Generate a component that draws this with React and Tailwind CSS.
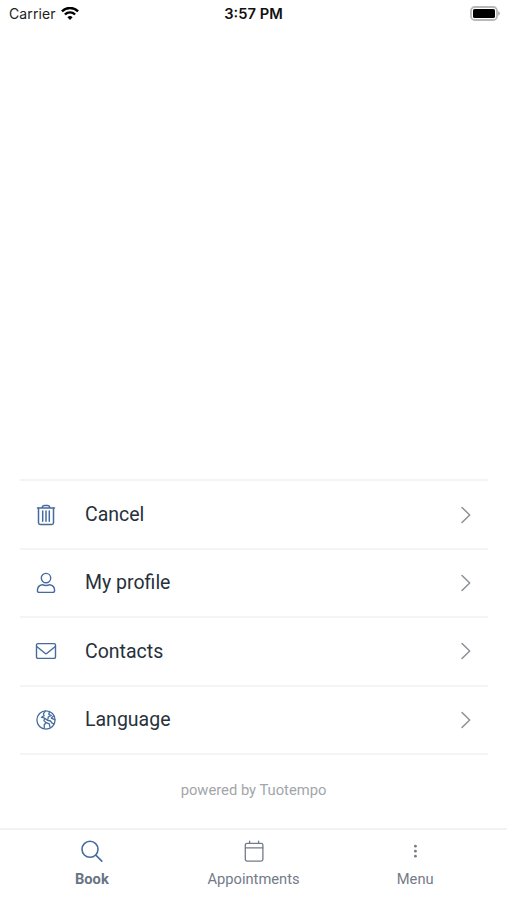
function TrashIcon() {
  return (
    <svg width="20" height="22" viewBox="0 0 20 22" fill="none" stroke="currentColor" strokeWidth="1.5" strokeLinecap="round" strokeLinejoin="round">
      <path d="M1.5 3.9h17M6 3.7c.3-1.4 1-2.2 2.2-2.2h3.6c1.2 0 1.9.8 2.2 2.2" />
      <path d="M2.5 4.2v14.5c0 1.1.6 1.7 1.7 1.7h11.6c1.1 0 1.7-.6 1.7-1.7V4.2M6.7 7v10.3M10 7v10.3M13.3 7v10.3" />
    </svg>
  );
}

function ProfileIcon() {
  return (
    <svg width="20" height="22" viewBox="0 0 20 22" fill="none" stroke="currentColor" strokeWidth="1.4" strokeLinejoin="round">
      <circle cx="10" cy="6.1" r="4.7" />
      <path d="M6.3 12.7C3.2 13.2 1.4 15.5 1.4 18.5c0 1.3.7 1.9 1.9 1.9h13.4c1.2 0 1.9-.6 1.9-1.9 0-3-1.8-5.3-4.9-5.8-2.4 1.1-5 1.1-7.4 0z" />
    </svg>
  );
}

function MailIcon() {
  return (
    <svg width="22" height="18" viewBox="0 0 22 18" fill="none" stroke="currentColor" strokeWidth="1.4" strokeLinecap="round" strokeLinejoin="round">
      <rect x="1.5" y="1.6" width="19" height="14.8" rx="1.5" />
      <path d="M2 4.7l8 6.6c.6.5 1.4.5 2 0l8-6.6" />
    </svg>
  );
}

function GlobeIcon() {
  return (
    <svg width="22" height="22" viewBox="0 0 22 22" fill="none" stroke="currentColor" strokeWidth="1.3" strokeLinecap="round" strokeLinejoin="round">
      <circle cx="11" cy="11" r="9.1" />
      <path d="M10.3 2.2L8.4 4.6l.7 2-2.7 1.6 3.2 1 3.1 2.2 2.8.6 1.5 2.1 1.6.5" />
      <path d="M14.5 2.8l-.7 2.5 2.5 1.2-3 1.3-.5 2.7M18.7 7.1l-2.4 2 3.3 1.6" />
      <path d="M9.7 9.4l-.8 2.2 2.2 2.1-1.9 2 .1 3.4M11.1 13.7l3.2 1.2.6 3" />
    </svg>
  );
}

function SearchIcon() {
  return (
    <svg width="24" height="24" viewBox="0 0 24 24" fill="none" stroke="currentColor" strokeWidth="1.6" strokeLinecap="round">
      <circle cx="10" cy="9.3" r="8" />
      <path d="M15.8 15.1l6 6" />
    </svg>
  );
}

function CalendarIcon() {
  return (
    <svg width="20" height="24" viewBox="0 0 20 24" fill="none" stroke="currentColor" strokeWidth="1.3" strokeLinecap="round">
      <rect x="1.3" y="3.3" width="17.6" height="17.8" rx="1.8" />
      <path d="M1.5 7.9h17.2M5.6 1.1v2.2M14.6 1.1v2.2" />
    </svg>
  );
}

function DotsIcon() {
  return (
    <svg width="20" height="24" viewBox="0 0 20 24" fill="currentColor">
      <circle cx="10.4" cy="6.2" r="1.4" />
      <circle cx="10.4" cy="11.2" r="1.4" />
      <circle cx="10.4" cy="16.2" r="1.4" />
    </svg>
  );
}

const MENU = [
  { label: "Cancel", icon: <TrashIcon /> },
  { label: "My profile", icon: <ProfileIcon /> },
  { label: "Contacts", icon: <MailIcon /> },
  { label: "Language", icon: <GlobeIcon /> },
];

function StatusBar() {
  return (
    <header className="grid h-[27px] grid-cols-3 items-center pl-[9px] pr-[7px] font-['Inter',sans-serif] text-[14px] text-[#222]">
      <div className="flex items-center gap-[5px]">
        <span className="tracking-[0.12px]">Carrier</span>
        <svg width="18" height="14" viewBox="0 0 18 14" fill="none" stroke="#000" strokeWidth="2.4">
          <path d="M.9 4.3a11.5 11.5 0 0 1 16.2 0M3.9 7.5a7.2 7.2 0 0 1 10.2 0" />
          <path d="M9 13l-2.6-2.8a3.7 3.7 0 0 1 5.2 0z" fill="#000" stroke="none" />
        </svg>
      </div>
      <span className="pt-[2px] pr-[2px] text-center text-[14.7px] font-semibold text-[#111]">3:57 PM</span>
      <svg className="justify-self-end" width="30" height="16" viewBox="0 0 30 16">
        <rect x="1" y="1" width="26" height="13" rx="3.8" fill="#fff" stroke="#b8b8b8" strokeWidth="1.8" />
        <rect x="3" y="3" width="22" height="9" rx="1.6" fill="#000" />
        <path d="M28.2 5.3c2.2.6 2.2 3.8 0 4.4z" fill="#aaa" />
      </svg>
    </header>
  );
}

function MenuRow({ icon, label }) {
  return (
    <li className="flex h-[68.4px] items-center border-b-2 border-[#f3f4f4] pl-[15px] pr-[16px]">
      <span className="flex w-[22px] justify-center text-[#466c9f]">{icon}</span>
      <span className="ml-[28px] flex-1 text-[19.5px] text-[#27313b]">{label}</span>
      <svg width="12" height="18" viewBox="0 0 12 18" fill="none" stroke="#8b9197" strokeWidth="1.5" strokeLinecap="round" strokeLinejoin="round">
        <path d="M2 1.5L9.7 9 2 16.5" />
      </svg>
    </li>
  );
}

function Tab({ icon, label, active }) {
  return (
    <button className="flex flex-1 flex-col items-center pt-[10px] text-[#737b89]">
      <span className={active ? "text-[#466c9f]" : "text-[#737b89]"}>{icon}</span>
      <span className={active ? "mt-[5px] text-[14.7px] leading-[20px] font-bold text-[#687484]" : "mt-[5px] text-[14.7px] leading-[20px]"}>
        {label}
      </span>
    </button>
  );
}

export default function App() {
  return (
    <div className="flex h-[900px] w-[507px] flex-col overflow-hidden bg-white font-['Roboto',sans-serif]">
      <StatusBar />
      <main className="flex flex-1 flex-col justify-end">
        <ul className="ml-[20px] mr-[19px] border-t-2 border-[#f3f4f4]">
          {MENU.map((item) => (
            <MenuRow key={item.label} {...item} />
          ))}
        </ul>
        <p className="mt-[25px] mb-[28px] text-center text-[14.75px] leading-[20px] text-[#a2a6aa]">powered by Tuotempo</p>
      </main>
      <nav className="flex h-[72px] border-t-2 border-[#f2f2f2] px-[11px]">
        <Tab icon={<SearchIcon />} label="Book" active />
        <Tab icon={<CalendarIcon />} label="Appointments" />
        <Tab icon={<DotsIcon />} label="Menu" />
      </nav>
    </div>
  );
}
